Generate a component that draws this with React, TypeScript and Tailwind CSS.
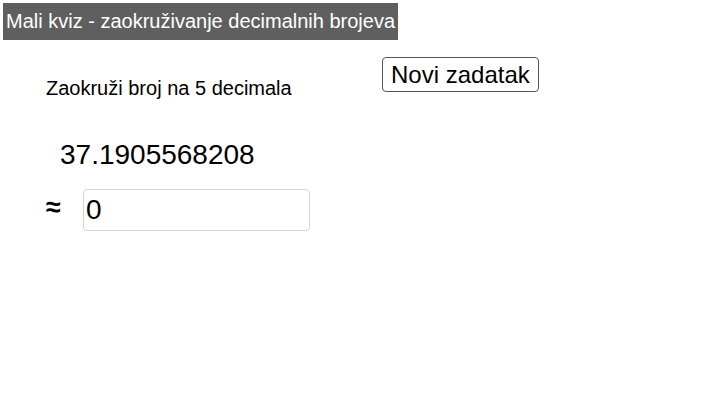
import React from "react";

export default function App() {
  return (
    <div className="w-[703px] h-[404px] bg-white text-black overflow-hidden" style={{ fontFamily: '"Liberation Sans", Arial, sans-serif' }}>
      <div className="pt-[3px] pl-[3px]">
        <div className="inline-flex h-[37px] items-center px-[3px] bg-[#5f5f5f] text-white text-[20px] leading-[23px] whitespace-nowrap">
          Mali kviz - zaokruživanje decimalnih brojeva
        </div>
      </div>
      <div className="flex items-start mt-[17px]">
        <div className="w-[382px] pl-[46px] pt-[20px] text-[20px] leading-[23px] whitespace-nowrap">
          Zaokruži broj na 5 decimala
        </div>
        <button className="h-[35px] px-[8px] border border-[#555] rounded-[4px] bg-white text-[24px] leading-[33px] text-black whitespace-nowrap">
          Novi zadatak
        </button>
      </div>
      <div className="mt-[39px] pl-[60px] text-[28px] leading-[32px] whitespace-nowrap">
        37.1905568208
      </div>
      <div className="flex items-center mt-[18px]">
        <div className="w-[83px] pl-[46px] text-[27px] leading-[30px] font-bold -mt-[6px]">≈</div>
        <div className="w-[227px] h-[42px] border border-[#d5d5d5] rounded-[4px] flex items-center pl-[2px] text-[28px] leading-[32px]">
          0
        </div>
      </div>
    </div>
  );
}
